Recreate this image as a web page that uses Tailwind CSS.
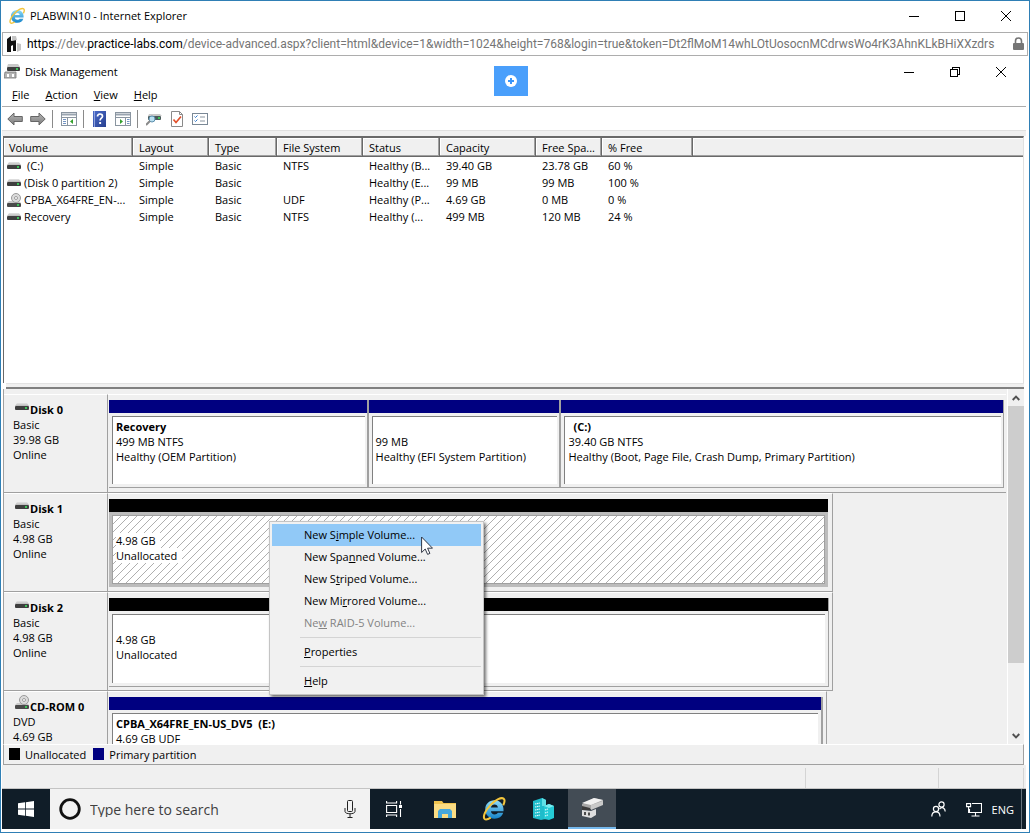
<!DOCTYPE html>
<html lang="en">
<head>
<meta charset="utf-8">
<title>PLABWIN10 - Internet Explorer</title>
<script src="https://cdn.jsdelivr.net/npm/@tailwindcss/browser@4"></script>
</head>
<body class="bg-white text-black font-['Open_Sans','Noto_Sans',sans-serif] text-[11px] leading-[15px]">

<!-- Shared icon symbols -->
<svg class="absolute w-0 h-0" aria-hidden="true">
  <defs>
    <linearGradient id="driveTop" x1="0" y1="0" x2="0" y2="1"><stop offset="0" stop-color="#e4e4e4"/><stop offset="1" stop-color="#b9b9b9"/></linearGradient>
    <linearGradient id="ieBlue" x1="0" y1="0" x2="0" y2="1"><stop offset="0" stop-color="#8fdcf8"/><stop offset="1" stop-color="#1583c9"/></linearGradient>
    <linearGradient id="arrowGrey" x1="0" y1="0" x2="0" y2="1"><stop offset="0" stop-color="#b5b5b5"/><stop offset="1" stop-color="#7d7d7d"/></linearGradient>
    <linearGradient id="helpBlue" x1="0" y1="0" x2="1" y2="1"><stop offset="0" stop-color="#4a6bcb"/><stop offset="1" stop-color="#28408f"/></linearGradient>
    <symbol id="drive" viewBox="0 0 14 8">
      <path d="M2 0h10l2 3H0z" fill="url(#driveTop)"/>
      <rect y="3" width="14" height="4" rx="1" fill="#3f3f3f"/>
      <rect x="10" y="4" width="2" height="2" fill="#3cc45a"/>
    </symbol>
    <symbol id="disc" viewBox="0 0 14 14">
      <path d="M2 8h10l2 2H0z" fill="#c9c9c9"/>
      <rect y="10" width="14" height="4" rx="1" fill="#4a4a4a"/>
      <rect x="10" y="11" width="2" height="2" fill="#3cc45a"/>
      <circle cx="9" cy="5" r="4.500" fill="#dcdcdc" stroke="#9a9a9a"/>
      <circle cx="9" cy="5" r="1.500" fill="#fff" stroke="#8a8a8a" stroke-width=".8"/>
    </symbol>
    <symbol id="ie" viewBox="0 0 24 24">
      <path d="M12.500 4c-5.200 0-8.600 3.700-8.600 8.500s3.500 8.500 8.600 8.500c4 0 6.900-2 8-5.500h-5c-.6 1-1.500 1.500-2.900 1.500-2 0-3.300-1.200-3.400-3h11.600c.5-6-3-10-8.300-10zm-3.300 6.500c.3-1.600 1.600-2.600 3.300-2.600s2.900 1 3.100 2.600z" fill="url(#ieBlue)"/>
      <path d="M20.500 8.500c1.500-3 1.500-5.200.3-6.100-2-1.400-7.200.9-11.900 5.800-5 5.200-7.400 11-5.600 12.900 1 1 3.200.4 5.700-1.100" fill="none" stroke="#f3c53c" stroke-width="1.900"/>
    </symbol>
    <symbol id="panel" viewBox="0 0 16 14">
      <rect x=".5" y=".5" width="15" height="13" fill="#fff" stroke="#8a95a0"/>
      <path d="M1 2.500h14" stroke="#9aa5b0" stroke-width="2"/><path d="M1 5.500h14" stroke="#8a95a0"/>
    </symbol>
  </defs>
</svg>

<div class="min-h-screen flex flex-col border border-[#2f7fb5] px-px">

  <!-- Browser title bar -->
  <header class="flex items-center h-[31px] pl-[6px] pr-4 pb-[2px]">
    <svg class="w-[18px] h-[18px]" aria-hidden="true"><use href="#ie"/></svg>
    <h1 class="ml-1 flex-1 text-[11px]">PLABWIN10 - Internet Explorer</h1>
    <div class="flex items-center gap-[34px]">
      <button aria-label="Minimize" class="block"><svg class="w-3 h-3" viewBox="0 0 12 12" shape-rendering="crispEdges"><path d="M1 6.500h10" stroke="#000"/></svg></button>
      <button aria-label="Maximize" class="block"><svg class="w-3 h-3" viewBox="0 0 12 12" shape-rendering="crispEdges"><rect x="1.500" y="1.500" width="9" height="9" fill="none" stroke="#000"/></svg></button>
      <button aria-label="Close" class="block"><svg class="w-3 h-3" viewBox="0 0 12 12"><path d="M1 1l10 10M11 1L1 11" stroke="#000"/></svg></button>
    </div>
  </header>

  <!-- Address bar -->
  <div class="flex items-center h-[24px] border border-[#adadad] pl-1 pr-[3px]">
    <svg class="w-[15px] h-[16px] shrink-0" viewBox="0 0 15 16" aria-hidden="true"><path d="M0 3l4-3v5l5-2v12H6V9L4 10v6H0z" fill="#111"/><path d="M5 0h4l1 4-5 1zM10 7l4 1v6l-4 2z" fill="#c4c4c4"/></svg>
    <a href="#" class="ml-[5px] flex-1 min-w-0 overflow-hidden whitespace-nowrap font-[Roboto,sans-serif] text-[12px] leading-4 text-[#757575]"><span class="text-black">https</span>://dev.<span class="text-black">practice-labs.com</span>/device-advanced.aspx?client=html&amp;device=1&amp;width=1024&amp;height=768&amp;login=true&amp;token=Dt2flMoM14whLOtUosocnMCdrwsWo4rK3AhnKLkBHiXXzdrs</a>
    <svg class="ml-1 w-[11px] h-[14px] shrink-0" viewBox="0 0 11 14" role="img" aria-label="Secure"><rect y="6" width="11" height="7" rx="1" fill="#757575"/><path d="M2.500 7V4a3 3 0 0 1 6 0v3" fill="none" stroke="#757575" stroke-width="1.600"/></svg>
  </div>

  <!-- Remote session -->
  <main class="relative flex-1 flex flex-col mr-[2px]">
    <button aria-label="Session tools" class="absolute left-1/2 top-[10px] -ml-5 w-[34px] h-[30px] bg-[#4a9ffb] flex items-center justify-center">
      <svg class="w-3 h-3" viewBox="0 0 12 12"><circle cx="6" cy="6" r="6" fill="#fff"/><path d="M6 3v6M3 6h6" stroke="#3b96fa" stroke-width="2"/></svg>
    </button>

    <div class="flex items-center h-[31px] pl-[2px] pr-[19px]">
      <svg class="w-4 h-[15px]" viewBox="0 0 16 15" aria-hidden="true"><path d="M4 0h10l2 3H3z" fill="#c9c9c9"/><rect x="3" y="3" width="13" height="4" rx="1" fill="#3f3f3f"/><rect x="12" y="4" width="2" height="2" fill="#3cc45a"/><path d="M1 8h11v6H0z" fill="#b4b4b4" stroke="#777" stroke-width=".8"/><path d="M3 10h2v3H3zM8 10h2v3H8z" fill="#fff"/></svg>
      <h2 class="ml-[5px] flex-1">Disk Management</h2>
      <div class="flex items-center gap-[34px]">
        <button aria-label="Minimize console" class="block"><svg class="w-3 h-3" viewBox="0 0 12 12" shape-rendering="crispEdges"><path d="M1 6.500h10" stroke="#000"/></svg></button>
        <button aria-label="Restore console" class="block"><svg class="w-3 h-3" viewBox="0 0 12 12" shape-rendering="crispEdges"><path d="M3.500 3V1.500h7v7H9M1.500 3.500h7v7h-7z" fill="none" stroke="#000"/></svg></button>
        <button aria-label="Close console" class="block"><svg class="w-3 h-3" viewBox="0 0 12 12"><path d="M1 1l10 10M11 1L1 11" stroke="#000"/></svg></button>
      </div>
    </div>

    <nav class="flex items-start gap-4 h-[20px] pl-[10px] border-b border-[#adadad]">
      <button class="block"><u>F</u>ile</button>
      <button class="block"><u>A</u>ction</button>
      <button class="block"><u>V</u>iew</button>
      <button class="block"><u>H</u>elp</button>
    </nav>

    <!-- Toolbar -->
    <div class="flex items-center h-[23px] pl-[5px] pt-px">
      <button aria-label="Back" class="block"><svg class="w-4 h-[14px]" viewBox="0 0 16 14"><path d="M.8 7L7 1v3.500h8.300v5H7V13z" fill="url(#arrowGrey)" stroke="#666"/></svg></button>
      <button aria-label="Forward" class="block ml-[7px]"><svg class="w-4 h-[14px]" viewBox="0 0 16 14"><path d="M15.200 7L9 1v3.500H.7v5H9V13z" fill="url(#arrowGrey)" stroke="#666"/></svg></button>
      <span class="ml-[6px] w-px h-[18px] bg-[#8a8a8a]"></span>
      <button aria-label="Show or hide console tree" class="block ml-2"><svg class="w-4 h-[14px]" viewBox="0 0 16 14"><use href="#panel" width="16" height="14"/><path d="M6.500 6v7" stroke="#8a95a0"/><path d="M2 7.500h3M2 9.500h3M2 11.500h3" stroke="#7394c4"/><path d="M12 7v5L9 9.500z" fill="#35a02e"/></svg></button>
      <span class="ml-[6px] w-px h-[18px] bg-[#8a8a8a]"></span>
      <button aria-label="Help contents" class="block ml-[9px]"><svg class="w-[13px] h-4" viewBox="0 0 13 16"><rect width="13" height="16" fill="url(#helpBlue)"/><path d="M1.500 0v16" stroke="#8ea2dd"/><path d="M4.500 5.500c0-3.300 5-3.300 5-.3 0 2-2.400 2-2.400 4.300" fill="none" stroke="#fff" stroke-width="1.700"/><rect x="6.200" y="11" width="1.900" height="2" fill="#fff"/></svg></button>
      <button aria-label="Show or hide action pane" class="block ml-[9px]"><svg class="w-4 h-[14px]" viewBox="0 0 16 14"><use href="#panel" width="16" height="14"/><path d="M10.500 6v7" stroke="#8a95a0"/><path d="M12 7.500h2.500M12 9.500h2.500M12 11.500h2.500" stroke="#7394c4"/><path d="M5 7v5l3-2.500z" fill="#35a02e"/></svg></button>
      <span class="ml-[6px] w-px h-[18px] bg-[#8a8a8a]"></span>
      <button aria-label="Rescan disks" class="block ml-2"><svg class="w-4 h-[13px]" viewBox="0 0 16 13"><path d="M3 1h11l2 2H2z" fill="#c9c9c9"/><rect x="2" y="3" width="13" height="4" rx="1" fill="#4a5a5a"/><rect x="12" y="4" width="2" height="2" fill="#3cc45a"/><circle cx="6" cy="6" r="3" fill="#b9dff0" stroke="#5b8fae"/><path d="M4 8l-4 4" stroke="#8a8a8a" stroke-width="2"/></svg></button>
      <button aria-label="Properties of volume" class="block ml-[9px]"><svg class="w-3 h-4" viewBox="0 0 12 16"><path d="M.5.5h8l3 3v12H.500z" fill="#fff" stroke="#8a8a8a"/><path d="M8.500.5v3h3" fill="none" stroke="#8a8a8a"/><path d="M2.500 8.500l2.500 3 5-6" fill="none" stroke="#e2502b" stroke-width="1.700"/></svg></button>
      <button aria-label="Settings" class="block ml-[9px]"><svg class="w-4 h-3" viewBox="0 0 16 12"><rect x=".5" y=".5" width="15" height="11" fill="#fff" stroke="#7a8896"/><path d="M2.500 3.500l1 1 2-2M2.500 7.500l1 1 2-2" fill="none" stroke="#2f77c9"/><path d="M8 4h5M8 8h5" stroke="#8a95a0"/></svg></button>
    </div>

    <div class="h-[6px] bg-[#f0f0f0] border-t border-[#e0e0e0]"></div>

    <!-- Volume list -->
    <section class="flex-1 ml-px mr-[2px] bg-white border-l border-t-2 border-[#696969] border-r border-r-[#e0e0e0]">
      <table class="w-full table-fixed border-separate border-spacing-0 text-left whitespace-nowrap">
        <colgroup><col class="w-[129px]"><col class="w-[76px]"><col class="w-[68px]"><col class="w-[86px]"><col class="w-[77px]"><col class="w-[96px]"><col class="w-[66px]"><col class="w-[91px]"><col></colgroup>
        <thead>
          <tr class="h-[19px] bg-[#f0f0f0]">
            <th class="font-normal pl-[5px] border-r border-b border-[#696969] shadow-[inset_-1px_-1px_#a0a0a0,inset_1px_1px_#fff]">Volume</th>
            <th class="font-normal pl-[6px] border-r border-b border-[#696969] shadow-[inset_-1px_-1px_#a0a0a0,inset_1px_1px_#fff]">Layout</th>
            <th class="font-normal pl-[6px] border-r border-b border-[#696969] shadow-[inset_-1px_-1px_#a0a0a0,inset_1px_1px_#fff]">Type</th>
            <th class="font-normal pl-[6px] border-r border-b border-[#696969] shadow-[inset_-1px_-1px_#a0a0a0,inset_1px_1px_#fff]">File System</th>
            <th class="font-normal pl-[6px] border-r border-b border-[#696969] shadow-[inset_-1px_-1px_#a0a0a0,inset_1px_1px_#fff]">Status</th>
            <th class="font-normal pl-[6px] border-r border-b border-[#696969] shadow-[inset_-1px_-1px_#a0a0a0,inset_1px_1px_#fff]">Capacity</th>
            <th class="font-normal pl-[6px] border-r border-b border-[#696969] shadow-[inset_-1px_-1px_#a0a0a0,inset_1px_1px_#fff]">Free Spa...</th>
            <th class="font-normal pl-[6px] border-r border-b border-[#696969] shadow-[inset_-1px_-1px_#a0a0a0,inset_1px_1px_#fff]">% Free</th>
            <th class="border-b border-[#696969] shadow-[inset_0_-1px_#a0a0a0,inset_1px_1px_#fff]"></th>
          </tr>
        </thead>
        <tbody>
          <tr class="h-[17px]"><td class="pl-[3px]"><span class="flex items-center gap-[6px]"><svg class="w-[14px] h-2" aria-hidden="true"><use href="#drive"/></svg>(C:)</span></td><td class="pl-[6px]">Simple</td><td class="pl-[6px]">Basic</td><td class="pl-[6px]">NTFS</td><td class="pl-[6px]">Healthy (B...</td><td class="pl-[6px]">39.40 GB</td><td class="pl-[6px]">23.78 GB</td><td class="pl-[6px]">60 %</td><td></td></tr>
          <tr class="h-[17px]"><td class="pl-[3px]"><span class="flex items-center gap-[3px]"><svg class="w-[14px] h-2" aria-hidden="true"><use href="#drive"/></svg>(Disk 0 partition 2)</span></td><td class="pl-[6px]">Simple</td><td class="pl-[6px]">Basic</td><td></td><td class="pl-[6px]">Healthy (E...</td><td class="pl-[6px]">99 MB</td><td class="pl-[6px]">99 MB</td><td class="pl-[6px]">100 %</td><td></td></tr>
          <tr class="h-[17px]"><td class="pl-[3px]"><span class="flex items-center gap-[3px]"><svg class="w-[14px] h-[14px]" aria-hidden="true"><use href="#disc"/></svg>CPBA_X64FRE_EN-...</span></td><td class="pl-[6px]">Simple</td><td class="pl-[6px]">Basic</td><td class="pl-[6px]">UDF</td><td class="pl-[6px]">Healthy (P...</td><td class="pl-[6px]">4.69 GB</td><td class="pl-[6px]">0 MB</td><td class="pl-[6px]">0 %</td><td></td></tr>
          <tr class="h-[17px]"><td class="pl-[3px]"><span class="flex items-center gap-[3px]"><svg class="w-[14px] h-2" aria-hidden="true"><use href="#drive"/></svg>Recovery</span></td><td class="pl-[6px]">Simple</td><td class="pl-[6px]">Basic</td><td class="pl-[6px]">NTFS</td><td class="pl-[6px]">Healthy (...</td><td class="pl-[6px]">499 MB</td><td class="pl-[6px]">120 MB</td><td class="pl-[6px]">24 %</td><td></td></tr>
        </tbody>
      </table>
    </section>
    <div class="ml-1 mr-[2px] h-[6px] bg-[#f0f0f0] border-b-2 border-[#808080] border-t border-t-[#e3e3e3]"></div>

    <!-- Graphical disk view -->
    <section class="flex h-[355px] ml-px mr-[2px] bg-[#f0f0f0] border-l border-[#a0a0a0]">
      <div class="flex-1 min-w-0 flex flex-col pt-[5px] pr-px h-[355px]">

        <div class="flex h-[99px] shrink-0">
          <div class="w-[104px] pt-[7px] pl-[9px] border-t border-t-white border-b border-b-[#a0a0a0] border-r border-r-[#a0a0a0]">
            <div class="flex items-start gap-px font-bold pl-[2px]"><svg class="w-[14px] h-2 mt-px" aria-hidden="true"><use href="#drive"/></svg>Disk 0</div><p>Basic</p><p>39.98 GB</p><p>Online</p>
          </div>
          <div class="flex-1 flex pl-px pt-[5px] pb-1 pr-[2px] border-t border-t-white border-b border-b-[#a0a0a0]">
            <div class="flex-[259] flex flex-col border-r-2 border-b border-[#a0a0a0] overflow-hidden"><div class="h-[13px] bg-[#000080]"></div><div class="flex-1 mt-[3px] ml-[3px] mr-[2px] mb-[3px] pl-[3px] pt-[2px] bg-white border-l border-t border-[#808080]"><p class="font-bold h-[15px]">Recovery</p><p>499 MB NTFS</p><p>Healthy (OEM Partition)</p></div></div>
            <div class="flex-[192] flex flex-col border-r-2 border-b border-[#a0a0a0] overflow-hidden"><div class="h-[13px] bg-[#000080]"></div><div class="flex-1 mt-[3px] ml-[3px] mr-[2px] mb-[3px] pl-[3px] pt-[2px] bg-white border-l border-t border-[#808080]"><p class="h-[15px]"></p><p>99 MB</p><p>Healthy (EFI System Partition)</p></div></div>
            <div class="flex-[444] flex flex-col border-r border-b border-[#a0a0a0] overflow-hidden"><div class="h-[13px] bg-[#000080]"></div><div class="flex-1 mt-[3px] ml-[3px] mr-[2px] mb-[3px] pl-[3px] pt-[2px] bg-white border-l border-t border-[#808080]"><p class="font-bold h-[15px] pl-[5px]">(C:)</p><p>39.40 GB NTFS</p><p>Healthy (Boot, Page File, Crash Dump, Primary Partition)</p></div></div>
          </div>
        </div>

        <div class="relative flex h-[99px] shrink-0">
          <div class="w-[104px] pt-[7px] pl-[9px] border-t border-t-white border-b border-b-[#a0a0a0] border-r border-r-[#a0a0a0]">
            <div class="flex items-start gap-px font-bold pl-[2px]"><svg class="w-[14px] h-2 mt-px" aria-hidden="true"><use href="#drive"/></svg>Disk 1</div><p>Basic</p><p>4.98 GB</p><p>Online</p>
          </div>
          <div class="flex-[725] flex pl-px pt-[5px] pb-[4px] pr-1 border-t border-t-white border-b border-b-[#a0a0a0] border-r border-r-[#a0a0a0]">
            <div class="flex-1 flex flex-col bg-[#bcbcbc]"><div class="h-[13px] bg-black"></div>
              <div class="relative flex-1 mt-[3px] ml-[3px] mr-[3px] mb-[3px] pl-[3px] pt-[2px] bg-white border border-[#a0a0a0]">
                <svg class="absolute inset-0 w-full h-full" aria-hidden="true"><defs><pattern id="hatch" width="8" height="8" patternUnits="userSpaceOnUse"><path d="M-1 9L9-1M-1 1L1-1M7 9L9 7" stroke="#a6a6a6" stroke-width=".9"/></pattern></defs><rect width="100%" height="100%" fill="url(#hatch)"/></svg>
                <p class="h-[15px]"></p><p class="relative w-[44px] bg-white">4.98 GB</p><p class="relative w-[66px] bg-white">Unallocated</p>
              </div>
            </div>
          </div>
          <div class="flex-[174]"></div>

          <!-- Context menu of the unallocated region -->
          <ul class="absolute z-10 left-[265px] top-[28px] w-[215px] p-[2px] bg-[#f1f1f1] border border-[#c4c4c4] shadow-[2px_2px_3px_rgba(0,0,0,0.55)]">
            <li><button class="block w-full h-[22px] pl-8 pb-[2px] text-left bg-[#91c9f7]">New S<u>i</u>mple Volume...</button></li>
            <li><button class="block w-full h-[22px] pl-8 pb-[2px] text-left">New Spa<u>n</u>ned Volume...</button></li>
            <li><button class="block w-full h-[22px] pl-8 pb-[2px] text-left">New S<u>t</u>riped Volume...</button></li>
            <li><button class="block w-full h-[22px] pl-8 pb-[2px] text-left">New Mi<u>r</u>rored Volume...</button></li>
            <li><button disabled class="block w-full h-[22px] pl-8 pb-[2px] text-left text-[#838383]">Ne<u>w</u> RAID-5 Volume...</button></li>
            <li class="ml-7 my-[3px] h-px bg-[#d4d4d4]"></li>
            <li><button class="block w-full h-[22px] pl-8 pb-[2px] text-left"><u>P</u>roperties</button></li>
            <li class="ml-7 my-[3px] h-px bg-[#d4d4d4]"></li>
            <li><button class="block w-full h-[22px] pl-8 pb-[2px] text-left"><u>H</u>elp</button></li>
          </ul>
          <svg class="absolute z-20 left-[417px] top-[43px] w-3 h-[19px]" viewBox="0 0 12 19" aria-hidden="true"><path d="M.6 1v15.500l3.600-3.500 2.400 5.400 2.300-1-2.300-5.200h4.900z" fill="#fff" stroke="#1c2333" stroke-width=".9"/></svg>
        </div>

        <div class="flex h-[99px] shrink-0">
          <div class="w-[104px] pt-[7px] pl-[9px] border-t border-t-white border-b border-b-[#a0a0a0] border-r border-r-[#a0a0a0]">
            <div class="flex items-start gap-px font-bold pl-[2px]"><svg class="w-[14px] h-2 mt-px" aria-hidden="true"><use href="#drive"/></svg>Disk 2</div><p>Basic</p><p>4.98 GB</p><p>Online</p>
          </div>
          <div class="flex-[725] flex pl-px pt-[5px] pb-[3px] pr-[3px] border-t border-t-white border-b border-b-[#a0a0a0] border-r border-r-[#a0a0a0]">
            <div class="flex-1 flex flex-col border-r border-b border-[#a0a0a0]"><div class="h-[13px] bg-black"></div><div class="flex-1 mt-[3px] ml-[3px] mr-[3px] mb-[3px] pl-[3px] pt-[2px] bg-white border-l border-t border-[#808080]"><p class="h-[15px]"></p><p>4.98 GB</p><p>Unallocated</p></div></div>
          </div>
          <div class="flex-[174]"></div>
        </div>

        <div class="flex flex-1 min-h-0 overflow-hidden">
          <div class="w-[104px] pt-[7px] pl-[9px] border-t border-t-white border-r border-r-[#a0a0a0]">
            <div class="flex items-start gap-px font-bold pl-[2px] h-[15px] whitespace-nowrap"><svg class="w-[14px] h-[14px] -mt-1 shrink-0" aria-hidden="true"><use href="#disc"/></svg>CD-ROM 0</div><p>DVD</p><p>4.69 GB</p>
          </div>
          <div class="flex-[719] flex pl-px pt-[5px] pr-[3px] border-t border-t-white border-r border-r-[#a0a0a0]">
            <div class="flex-1 flex flex-col border-r-2 border-[#a0a0a0]"><div class="h-[13px] shrink-0 bg-[#000080]"></div><div class="flex-1 mt-[3px] ml-[3px] mr-[3px] pl-[3px] pt-[2px] bg-white border-l border-t border-[#808080]"><p class="font-bold">CPBA_X64FRE_EN-US_DV5&nbsp; (E:)</p><p>4.69 GB UDF</p></div></div>
          </div>
          <div class="flex-[180]"></div>
        </div>
      </div>

      <!-- Scroll bar -->
      <div class="flex flex-col w-[17px] border-l border-white bg-[#f0f0f0]">
        <button aria-label="Scroll up" class="h-[17px] flex items-center justify-center"><svg class="w-2 h-[6px]" viewBox="0 0 8 6"><path d="M.7 5L4 1.700 7.300 5" fill="none" stroke="#505050" stroke-width="1.900"/></svg></button>
        <div class="flex-[257] bg-[#cdcdcd]"></div>
        <div class="flex-[64]"></div>
        <button aria-label="Scroll down" class="h-[17px] flex items-center justify-center"><svg class="w-2 h-[6px]" viewBox="0 0 8 6"><path d="M.7 1L4 4.300 7.300 1" fill="none" stroke="#505050" stroke-width="1.900"/></svg></button>
      </div>
    </section>

    <!-- Legend -->
    <div class="flex items-center h-[21px] ml-px mr-[2px] pl-[5px] pb-px bg-[#f0f0f0] border-t border-t-white border-l border-r border-b border-[#a0a0a0]">
      <span class="w-[11px] h-3 bg-black"></span><span class="ml-[5px]">Unallocated</span>
      <span class="ml-[7px] w-[11px] h-3 bg-[#000080]"></span><span class="ml-[5px]">Primary partition</span>
    </div>

    <!-- Status bar -->
    <div class="flex justify-end h-[24px] pt-[3px] bg-[#f0f0f0] border-b border-[#c4c4c4]">
      <span class="w-[133px] border-l border-[#d4d4d4]"></span><span class="w-[86px] border-l border-r border-[#d4d4d4] mr-[2px]"></span>
    </div>

    <!-- Taskbar -->
    <footer class="flex h-[40px] bg-[#101d28] mb-[3px]">
      <button aria-label="Start" class="w-12 flex items-center justify-center"><svg class="w-4 h-4" viewBox="0 0 16 16"><path d="M0 2.300L7 1.300v6.300H0zM7.800 1.200L16 0v7.600H7.800zM0 8.400h7v6.300L0 13.700zM7.800 8.400H16V16l-8.200-1.200z" fill="#fff"/></svg></button>
      <label class="flex items-center w-[320px] bg-[#f2f2f2] pl-[9px] pr-[14px]">
        <svg class="w-[22px] h-[22px] shrink-0" viewBox="0 0 22 22" aria-hidden="true"><circle cx="11" cy="11" r="9.300" fill="none" stroke="#111" stroke-width="2.800"/></svg>
        <input type="text" aria-label="Search" placeholder="Type here to search" class="ml-[9px] flex-1 min-w-0 bg-transparent outline-none text-[14px] placeholder:text-[#404040]">
        <svg class="w-3 h-[18px] shrink-0" viewBox="0 0 12 18" aria-hidden="true"><rect x="3.500" y=".5" width="5" height="11" rx="1" fill="none" stroke="#222"/><path d="M1 8v3.500c0 3 10 3 10 0V8M6 14v3.500M3.500 17.500h5" fill="none" stroke="#222"/></svg>
      </label>
      <div class="flex flex-1 gap-px pl-[2px]">
        <button aria-label="Task View" class="w-12 pr-1 flex items-center justify-center"><svg class="w-4 h-4" viewBox="0 0 16 16" fill="none" stroke="#fff" stroke-width="1.100"><path d="M.6 4.500h10v7H.6zM.6 0v2h10V0M.6 16v-2h10v2M14.500 0v3.500M14.500 8v8"/><path d="M13 4h3v3h-3z" fill="#fff" stroke="none"/></svg></button>
        <button aria-label="File Explorer" class="w-12 flex items-center justify-center"><svg class="w-[22px] h-[18px]" viewBox="0 0 22 18"><path d="M0 1h8l1.500 2H22v15H0z" fill="#f0c34e"/><path d="M0 4h22v14H0z" fill="#fbdc83"/><path d="M4 18v-7l2-2h10l2 2v7h-4v-4H8v4z" fill="#46a7dc"/></svg></button>
        <button aria-label="Internet Explorer" class="w-12 flex items-center justify-center"><svg class="w-[26px] h-[26px]"><use href="#ie"/></svg></button>
        <button aria-label="Server Manager" class="w-12 flex items-center justify-center"><svg class="w-[22px] h-[22px]" viewBox="0 0 22 22"><path d="M1 3l9-3 4 2v19l-5 1-8-2z" fill="#1fbccb"/><path d="M10 0l4 2v6h-4z" fill="#5fe0e6"/><path d="M12 8l5-2 5 2v12l-5 2-5-1z" fill="#25cbd6"/><path d="M17 6l5 2-5 2-5-2z" fill="#7aebef"/><path d="M3 6l5-1M3 9l5-1M3 12l5-1M3 15l5-1M3 18l5-1M13 12l3-1M13 15l3-1M13 18l3-1" stroke="#e8ffff" stroke-width="1.100" stroke-dasharray="1.500 .6"/></svg></button>
        <button aria-label="Disk Management" class="w-12 flex items-center justify-center bg-[#434c55] border-b-2 border-[#76b9ed]"><svg class="w-[22px] h-5" viewBox="0 0 22 20"><path d="M1 6l12-6 9 2v4L10 11 1 9z" fill="#a6a6a6"/><path d="M1 5l12-5 9 2-12 5z" fill="#f1f1f1"/><path d="M10 7l12-4v4l-12 5z" fill="#c9c9c9"/><path d="M1 8l8 2v2H1z" fill="#3b3b3b"/><path d="M1 12l9 1 5-2v6l-5 3-9-2z" fill="#dedede"/><path d="M3 14h2v3H3zM7 14.500h2v3H7z" fill="#4c4c4c"/></svg></button>
      </div>
      <div class="flex items-center text-white">
        <button aria-label="People" class="block"><svg class="w-[15px] h-4" viewBox="0 0 15 16" fill="none" stroke="#fff" stroke-width="1.200"><circle cx="10.500" cy="3.500" r="2.600"/><circle cx="5" cy="8" r="2.600"/><path d="M.8 15.500c0-6.200 8.200-6.200 8.200 0M8.500 8c2.500-3 5.700-.8 5.700 2.500"/></svg></button>
        <button aria-label="Network" class="block ml-5"><svg class="w-4 h-[15px]" viewBox="0 0 16 15" fill="none" stroke="#fff" stroke-width="1.100"><path d="M6 1.500h9.500v9H3.500V7M9.500 11v3M5.500 14h8"/><path d="M.6 1.600h4v3h-4zM2.600 5v6"/></svg></button>
        <button class="block ml-[10px] mr-[7px] text-[11px]">ENG</button>
        <span class="w-px h-full bg-[#67717a] mr-1"></span>
      </div>
    </footer>
  </main>
</div>
</body>
</html>
